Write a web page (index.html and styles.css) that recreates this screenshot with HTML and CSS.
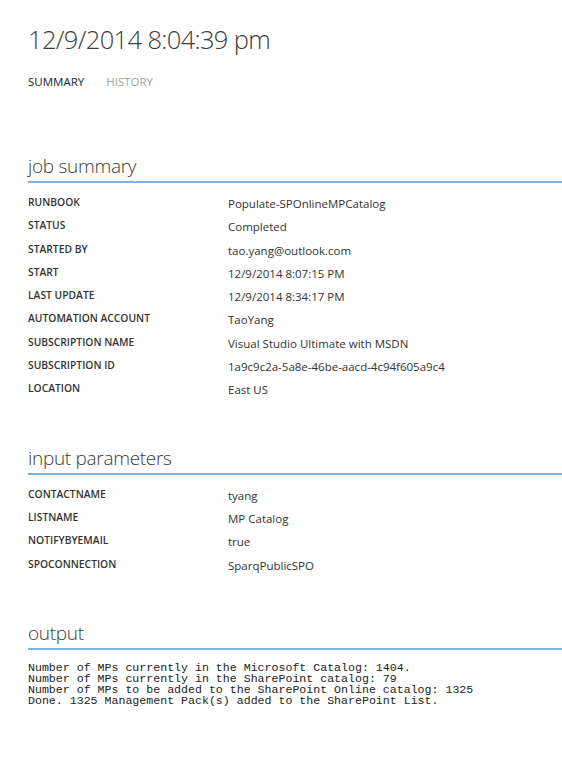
FILE: index.html
```html
<!DOCTYPE html>
<html>
<head>
<meta charset="utf-8">
<link rel="stylesheet" href="styles.css">
</head>
<body>
<div class="page">
  <h1 class="title">12/9/2014 8:04:39 pm</h1>
  <nav class="tabs">
    <span class="tab active">SUMMARY</span>
    <span class="tab">HISTORY</span>
  </nav>

  <section class="section summary">
    <h2 class="heading">job summary</h2>
    <dl class="props">
      <div class="row"><dt>RUNBOOK</dt><dd>Populate-SPOnlineMPCatalog</dd></div>
      <div class="row"><dt>STATUS</dt><dd>Completed</dd></div>
      <div class="row"><dt>STARTED BY</dt><dd>tao.yang@outlook.com</dd></div>
      <div class="row"><dt>START</dt><dd>12/9/2014 8:07:15 PM</dd></div>
      <div class="row"><dt>LAST UPDATE</dt><dd>12/9/2014 8:34:17 PM</dd></div>
      <div class="row"><dt>AUTOMATION ACCOUNT</dt><dd>TaoYang</dd></div>
      <div class="row"><dt>SUBSCRIPTION NAME</dt><dd>Visual Studio Ultimate with MSDN</dd></div>
      <div class="row"><dt>SUBSCRIPTION ID</dt><dd>1a9c9c2a-5a8e-46be-aacd-4c94f605a9c4</dd></div>
      <div class="row"><dt>LOCATION</dt><dd>East US</dd></div>
    </dl>
  </section>

  <section class="section params">
    <h2 class="heading">input parameters</h2>
    <dl class="props">
      <div class="row"><dt>CONTACTNAME</dt><dd>tyang</dd></div>
      <div class="row"><dt>LISTNAME</dt><dd>MP Catalog</dd></div>
      <div class="row"><dt>NOTIFYBYEMAIL</dt><dd>true</dd></div>
      <div class="row"><dt>SPOCONNECTION</dt><dd>SparqPublicSPO</dd></div>
    </dl>
  </section>

  <section class="section output">
    <h2 class="heading">output</h2>
    <pre class="log">Number of MPs currently in the Microsoft Catalog: 1404.
Number of MPs currently in the SharePoint catalog: 79
Number of MPs to be added to the SharePoint Online catalog: 1325
Done. 1325 Management Pack(s) added to the SharePoint List.</pre>
  </section>
</div>
</body>
</html>
```

FILE: styles.css
```css
html, body {
  margin: 0;
  padding: 0;
  background: #ffffff;
}

body {
  font-family: "Open Sans", "Liberation Sans", sans-serif;
  color: #333333;
}

.page {
  padding: 21px 0 40px 28px;
}

.title {
  margin: 0;
  font-weight: 300;
  font-size: 25.5px;
  line-height: 36px;
  color: #3c3c3c;
  letter-spacing: -0.65px;
}

.tabs {
  display: flex;
  gap: 22px;
  margin-top: 17px;
  font-size: 11.5px;
  line-height: 16px;
}

.tab {
  color: #a0a0a0;
}

.tab.active {
  color: #222222;
}

.section {
  display: flex;
  flex-direction: column;
}

.summary {
  margin-top: 60px;
}

.params {
  margin-top: 38px;
}

.output {
  margin-top: 38px;
}

.heading {
  margin: 3px 0 0 0;
  font-weight: 300;
  font-size: 19px;
  line-height: 26px;
  color: #3a3a3a;
  padding-bottom: 2px;
  border-bottom: 2px solid #7db4e6;
  letter-spacing: -0.3px;
}

.props {
  margin: 11px 0 0 0;
  display: flex;
  flex-direction: column;
}

.row {
  display: grid;
  grid-template-columns: 200px 1fr;
  align-items: baseline;
  height: 23.3px;
}

.row dt {
  font-weight: 600;
  font-size: 10.3px;
  color: #333333;
}

.row dd {
  margin: 0;
  font-size: 11.5px;
  color: #333333;
  position: relative;
  top: 2px;
}

.log {
  margin: 12px 0 0 0;
  font-family: "Liberation Mono", "Courier New", monospace;
  font-size: 11.6px;
  line-height: 11px;
  color: #222222;
}
```
